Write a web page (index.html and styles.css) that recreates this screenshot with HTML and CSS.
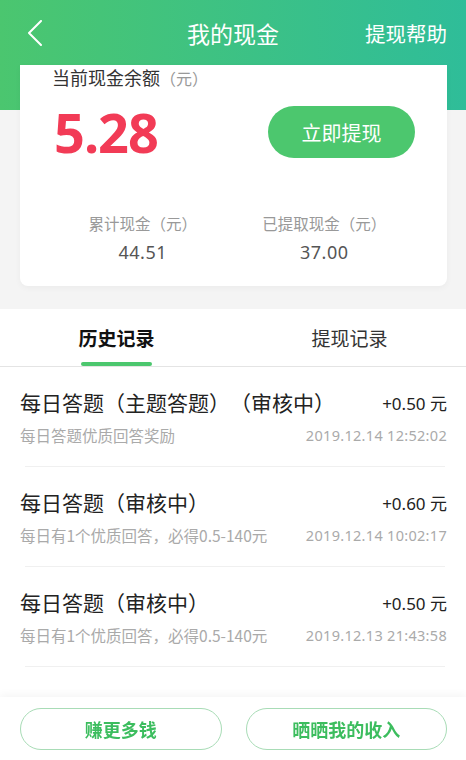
FILE: index.html
```html
<!DOCTYPE html>
<html lang="zh-CN">
<head>
  <meta charset="UTF-8" />
  <meta name="viewport" content="width=device-width, initial-scale=1.0" />
  <title>我的现金</title>
  <link rel="stylesheet" href="styles.css">
</head>
<body>
  <header class="top">
    <div class="nav">
      <span class="back">
        <svg width="16" height="26" viewBox="0 0 16 26"><polyline points="14,1 2,13 14,25" fill="none" stroke="#fff" stroke-width="2" stroke-linecap="round" stroke-linejoin="round"/></svg>
      </span>
      <span class="title">我的现金</span>
      <span class="help">提现帮助</span>
    </div>
  </header>

  <section class="card">
    <div class="label">当前现金余额<span class="unit">（元）</span></div>
    <div class="balance-row">
      <span class="balance">5.28</span>
      <button class="withdraw">立即提现</button>
    </div>
    <div class="stats">
      <div class="stat">
        <div class="stat-label">累计现金（元）</div>
        <div class="stat-value">44.51</div>
      </div>
      <div class="stat">
        <div class="stat-label">已提取现金（元）</div>
        <div class="stat-value">37.00</div>
      </div>
    </div>
  </section>

  <nav class="tabs">
    <div class="tab active">历史记录</div>
    <div class="tab">提现记录</div>
  </nav>

  <section class="list">
    <div class="item">
      <div class="row">
        <span class="name">每日答题（主题答题）（审核中）</span>
        <span class="amount">+0.50 元</span>
      </div>
      <div class="row sub">
        <span>每日答题优质回答奖励</span>
        <span class="date">2019.12.14 12:52:02</span>
      </div>
    </div>
    <div class="item">
      <div class="row">
        <span class="name">每日答题（审核中）</span>
        <span class="amount">+0.60 元</span>
      </div>
      <div class="row sub">
        <span>每日有1个优质回答，必得0.5-140元</span>
        <span class="date">2019.12.14 10:02:17</span>
      </div>
    </div>
    <div class="item">
      <div class="row">
        <span class="name">每日答题（审核中）</span>
        <span class="amount">+0.50 元</span>
      </div>
      <div class="row sub">
        <span>每日有1个优质回答，必得0.5-140元</span>
        <span class="date">2019.12.13 21:43:58</span>
      </div>
    </div>
  </section>

  <footer class="bottom">
    <button class="ghost">赚更多钱</button>
    <button class="ghost">晒晒我的收入</button>
  </footer>
</body>
</html>
```

FILE: styles.css
```css
body {
  margin: 0;
  font-family: "Noto Sans CJK SC", "Noto Sans", sans-serif;
  background-color: #f4f4f4;
  color: #222;
  height: 760px;
  overflow: hidden;
  text-spacing-trim: space-all;
}
.top {
  background: linear-gradient(90deg, #4bc66f, #2fbd99);
  height: 110px;
}
.nav {
  height: 65px;
  display: flex;
  align-items: center;
  justify-content: space-between;
  padding: 0 19px 0 27px;
  color: #fff;
}
.back {
  width: 74px;
  display: flex;
  align-items: center;
}
.title {
  font-size: 23px;
}
.help {
  font-size: 20.5px;
  width: 82px;
  text-align: right;
  white-space: nowrap;
}
.card {
  background: #fff;
  margin: -45px 19px 0 20px;
  padding: 0 32px 23px 32px;
  border-radius: 0 0 8px 8px;
  box-shadow: 0 2px 6px rgba(0, 0, 0, 0.04);
}
.label {
  font-size: 18px;
  line-height: 24px;
  color: #333;
}
.label .unit {
  color: #999;
  font-size: 16px;
}
.balance-row {
  display: flex;
  justify-content: space-between;
  align-items: center;
  margin-top: 16px;
  height: 52px;
}
.balance {
  font-family: "Noto Sans", sans-serif;
  font-weight: bold;
  font-size: 54px;
  color: #f23b56;
  letter-spacing: -1px;
  margin-left: 2px;
}
.withdraw {
  width: 147px;
  height: 52px;
  border: none;
  border-radius: 26px;
  background: #4cc76e;
  color: #fff;
  font-family: inherit;
  font-size: 20px;
}
.stats {
  display: grid;
  grid-template-columns: 1fr 1fr;
  margin-top: 55px;
  text-align: center;
}
.stat-label {
  font-size: 15.5px;
  line-height: 20px;
  color: #999;
}
.stat-value {
  font-family: "Noto Sans", sans-serif;
  font-size: 18px;
  line-height: 22px;
  color: #555;
  margin-top: 8px;
  letter-spacing: 0.5px;
}
.tabs {
  margin-top: 23px;
  background: #fff;
  height: 57px;
  border-bottom: 1px solid #e4e4e4;
  display: grid;
  grid-template-columns: 1fr 1fr;
}
.tab {
  font-size: 19px;
  color: #333;
  text-align: center;
  line-height: 57px;
  position: relative;
}
.tab.active {
  color: #111;
  font-weight: bold;
}
.tab.active::after {
  content: "";
  position: absolute;
  left: 50%;
  bottom: 0;
  width: 71px;
  height: 4px;
  margin-left: -36px;
  border-radius: 2px;
  background: #4cc76e;
}
.list {
  background: #fff;
  height: 340px;
}
.item {
  padding: 21px 19px 22px 20px;
  position: relative;
}
.item::after {
  content: "";
  position: absolute;
  left: 25px;
  right: 21px;
  bottom: 0;
  border-bottom: 1px solid #f0f0f0;
}
.row {
  display: flex;
  justify-content: space-between;
  align-items: center;
  height: 28px;
}
.name {
  font-size: 21px;
  color: #222;
}
.amount {
  font-family: "Noto Sans", sans-serif;
  font-size: 17px;
  color: #222;
}
.row.sub {
  height: 20px;
  margin-top: 9px;
  font-size: 15.5px;
  color: #aaa;
}
.date {
  font-family: "Noto Sans", sans-serif;
  font-size: 14.5px;
  color: #aaa;
  letter-spacing: 0.3px;
}
.bottom {
  position: fixed;
  left: 0;
  right: 0;
  bottom: 0;
  height: 63px;
  background: #fff;
  box-shadow: 0 -3px 8px rgba(0, 0, 0, 0.04);
  display: grid;
  grid-template-columns: 1fr 1fr;
  gap: 24px;
  padding: 11px 19px 0 20px;
  box-sizing: border-box;
}
.ghost {
  height: 42px;
  border: 1px solid #a8dcb6;
  border-radius: 21px;
  background: #fff;
  color: #3cbd5e;
  font-family: inherit;
  font-size: 18px;
  font-weight: bold;
}
```
